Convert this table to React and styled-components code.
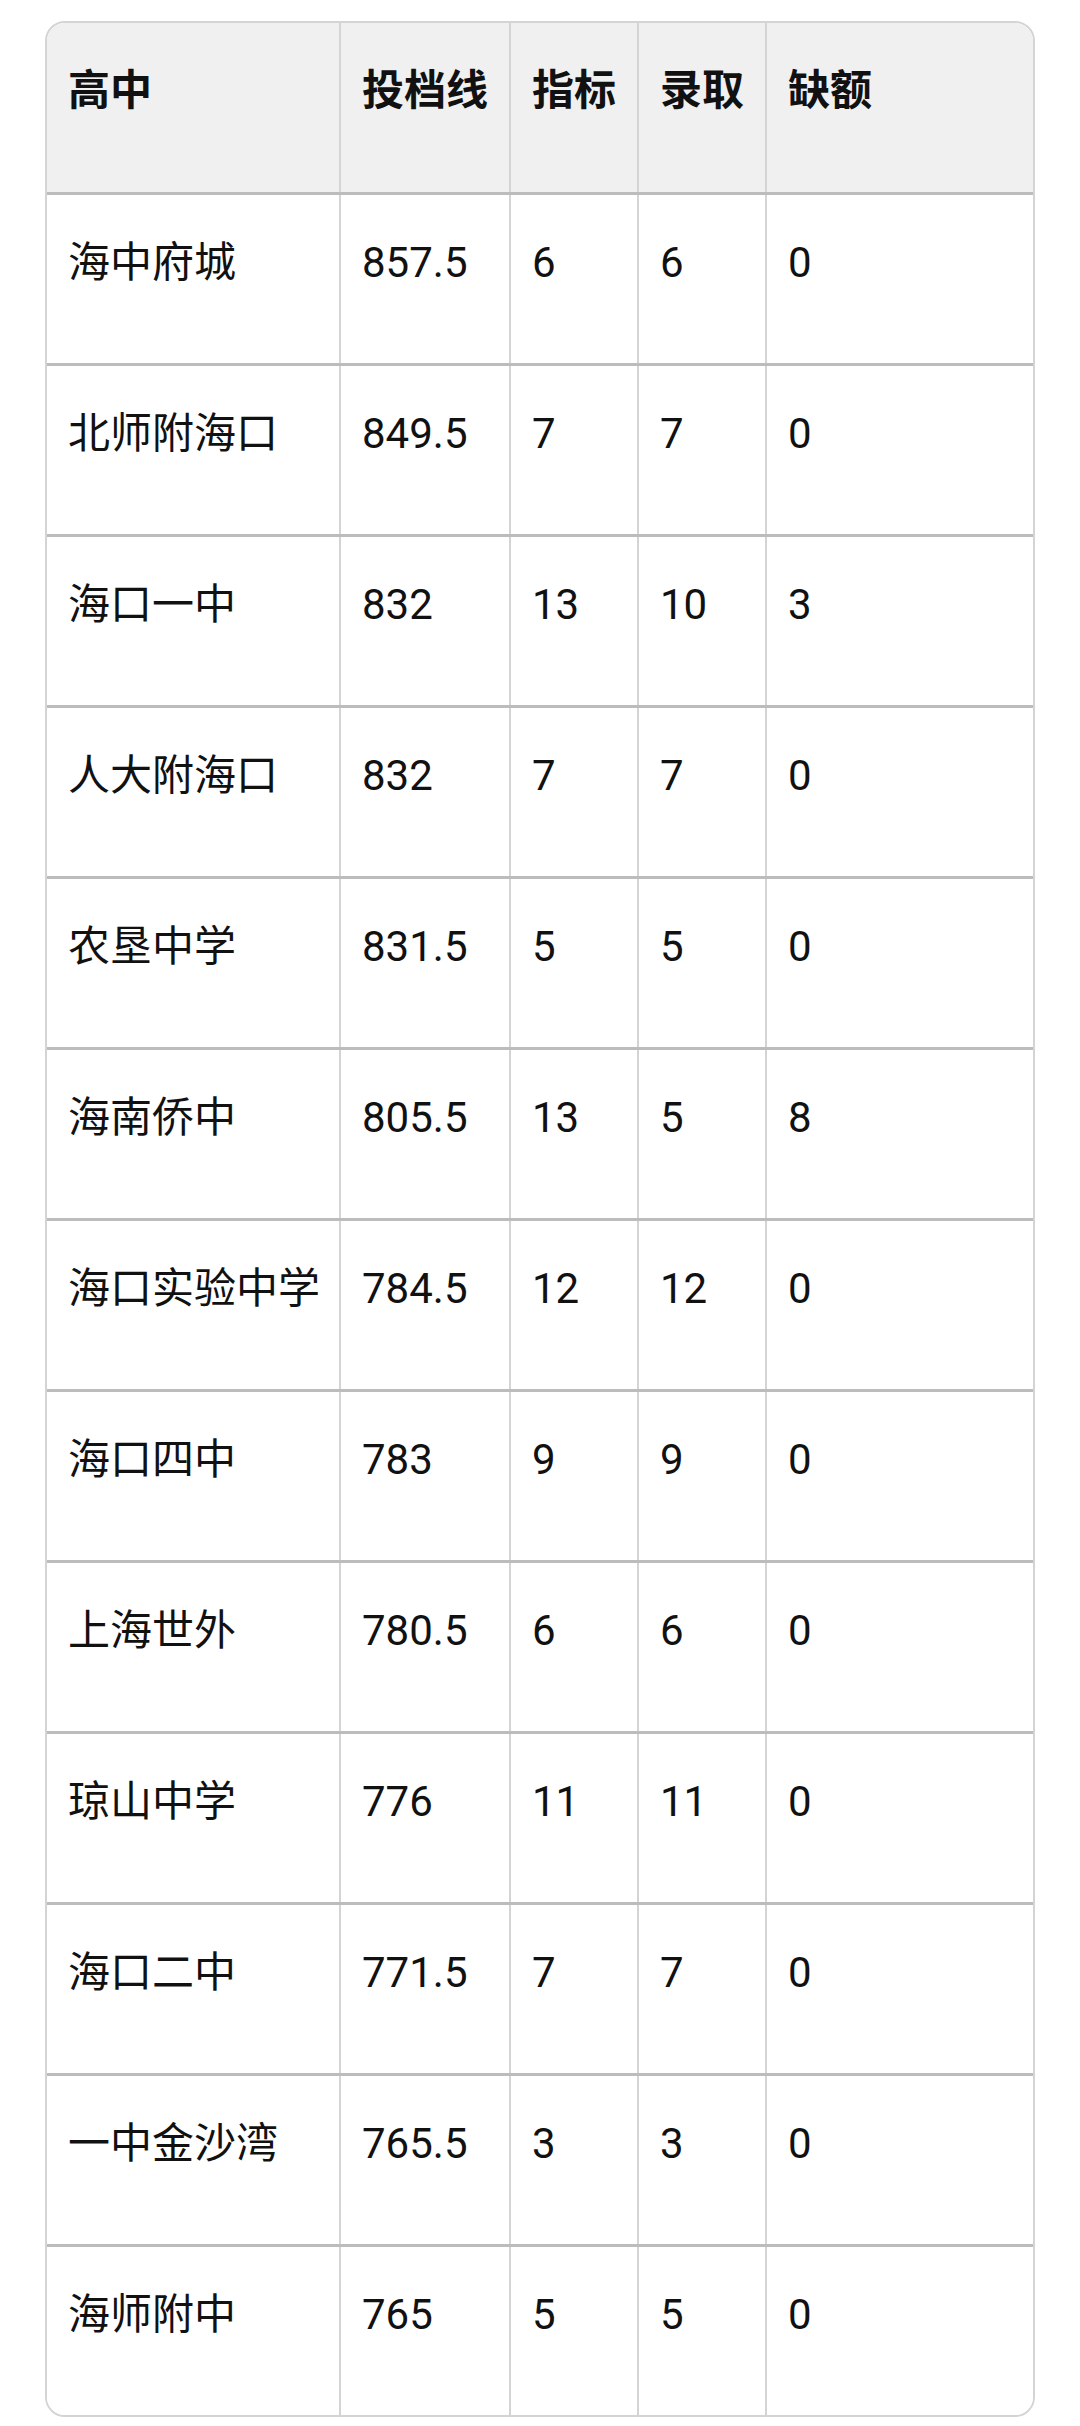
import React from 'react'
import styled, { createGlobalStyle } from 'styled-components'

const GlobalStyle = createGlobalStyle`
  body {
    margin: 0;
    background: #ffffff;
    font-family: Roboto, "Noto Sans CJK SC", sans-serif;
    color: #111111;
  }
`

const Page = styled.div`
  padding: 21px 45px 9px;
`

const Table = styled.div`
  border: 2px solid #d4d4d4;
  border-radius: 20px;
  overflow: hidden;
`

const Row = styled.div`
  display: grid;
  grid-template-columns: 292px 170px 128px 128px 1fr;
  height: ${(p) => (p.$head ? '169px' : '168px')};
  background: ${(p) => (p.$head ? '#f0f0f0' : '#ffffff')};
  border-top: ${(p) => (p.$head ? 'none' : '3px solid #bcbcbc')};
`

const Cell = styled.div`
  box-sizing: border-box;
  padding: 36px 0 0 21px;
  font-size: 42px;
  line-height: 63px;
  font-weight: ${(p) => (p.$head ? 700 : 400)};
  white-space: nowrap;
  border-left: 2px solid #d4d4d4;

  &:first-child {
    border-left: none;
  }
`

const columns = ['高中', '投档线', '指标', '录取', '缺额']

const rows = [
  ['海中府城', '857.5', '6', '6', '0'],
  ['北师附海口', '849.5', '7', '7', '0'],
  ['海口一中', '832', '13', '10', '3'],
  ['人大附海口', '832', '7', '7', '0'],
  ['农垦中学', '831.5', '5', '5', '0'],
  ['海南侨中', '805.5', '13', '5', '8'],
  ['海口实验中学', '784.5', '12', '12', '0'],
  ['海口四中', '783', '9', '9', '0'],
  ['上海世外', '780.5', '6', '6', '0'],
  ['琼山中学', '776', '11', '11', '0'],
  ['海口二中', '771.5', '7', '7', '0'],
  ['一中金沙湾', '765.5', '3', '3', '0'],
  ['海师附中', '765', '5', '5', '0'],
]

export default function App() {
  return (
    <>
      <GlobalStyle />
      <Page>
        <Table>
          <Row $head>
            {columns.map((c) => (
              <Cell key={c} $head>{c}</Cell>
            ))}
          </Row>
          {rows.map((r) => (
            <Row key={r[0]}>
              {r.map((v, i) => (
                <Cell key={i}>{v}</Cell>
              ))}
            </Row>
          ))}
        </Table>
      </Page>
    </>
  )
}
